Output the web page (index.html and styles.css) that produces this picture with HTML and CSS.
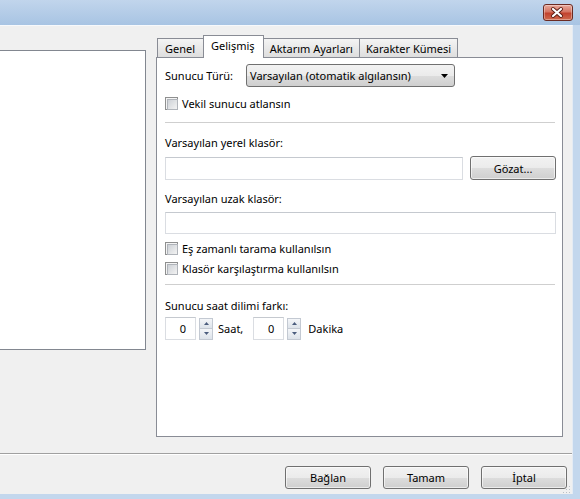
FILE: index.html
```html
<!DOCTYPE html>
<html lang="tr">

<head>
    <meta charset="UTF-8">
    <meta name="viewport" content="width=device-width, initial-scale=1.0">
    <link rel="stylesheet" href="styles.css">
</head>

<body>
    <div class="window">
        <div class="titlebar">
            <button class="close" type="button">
                <svg width="30" height="17" viewBox="0 0 30 17">
                    <path d="M11 5l8 7M19 5l-8 7" stroke="#5b1d14" stroke-width="4" stroke-linecap="round" />
                    <path d="M11 5l8 7M19 5l-8 7" stroke="#fff" stroke-width="2.2" stroke-linecap="round" />
                </svg>
            </button>
        </div>

        <div class="dialog">
            <div class="main">
                <div class="tree"></div>

                <div class="tabs-area">
                    <div class="tab-row">
                        <div class="tab">Genel</div>
                        <div class="tab active">Gelişmiş</div>
                        <div class="tab">Aktarım Ayarları</div>
                        <div class="tab">Karakter Kümesi</div>
                    </div>

                    <div class="panel">
                        <div class="row select-row">
                            <span class="field-label">Sunucu Türü:</span>
                            <div class="select">
                                <span>Varsayılan (otomatik algılansın)</span>
                                <svg width="7" height="4" viewBox="0 0 7 4"><path d="M0 0h7L3.5 4z" fill="#000" /></svg>
                            </div>
                        </div>

                        <label class="check first-check"><span class="cb"></span>Vekil sunucu atlansın</label>

                        <div class="sep sep-top"></div>

                        <div class="label label-local">Varsayılan yerel klasör:</div>
                        <div class="row input-row">
                            <div class="input grow"></div>
                            <button class="btn browse" type="button">Gözat...</button>
                        </div>

                        <div class="label label-remote">Varsayılan uzak klasör:</div>
                        <div class="input remote"></div>

                        <label class="check sync-check"><span class="cb"></span>Eş zamanlı tarama kullanılsın</label>
                        <label class="check cmp-check"><span class="cb"></span>Klasör karşılaştırma kullanılsın</label>

                        <div class="sep sep-bottom"></div>

                        <div class="label label-tz">Sunucu saat dilimi farkı:</div>
                        <div class="row spin-row">
                            <div class="input spin-input">0</div>
                            <div class="spinner">
                                <span><svg width="5" height="3" viewBox="0 0 5 3"><path d="M0 3h5L2.5 0z" fill="#4b5d7e" /></svg></span>
                                <span><svg width="5" height="3" viewBox="0 0 5 3"><path d="M0 0h5L2.5 3z" fill="#4b5d7e" /></svg></span>
                            </div>
                            <span class="unit">Saat,</span>
                            <div class="input spin-input">0</div>
                            <div class="spinner">
                                <span><svg width="5" height="3" viewBox="0 0 5 3"><path d="M0 3h5L2.5 0z" fill="#4b5d7e" /></svg></span>
                                <span><svg width="5" height="3" viewBox="0 0 5 3"><path d="M0 0h5L2.5 3z" fill="#4b5d7e" /></svg></span>
                            </div>
                            <span class="unit unit-last">Dakika</span>
                        </div>
                    </div>
                </div>
            </div>

            <div class="footer-sep"></div>

            <div class="buttons">
                <button class="btn" type="button">Bağlan</button>
                <button class="btn" type="button">Tamam</button>
                <button class="btn" type="button">İptal</button>
            </div>

            <svg class="grip" width="8" height="7" viewBox="0 0 8 7">
                <rect x="6" y="0" width="1" height="1" fill="#b8bec6" />
                <rect x="3" y="3" width="1" height="1" fill="#b8bec6" />
                <rect x="6" y="3" width="1" height="1" fill="#b8bec6" />
                <rect x="0" y="6" width="1" height="1" fill="#b8bec6" />
                <rect x="3" y="6" width="1" height="1" fill="#b8bec6" />
                <rect x="6" y="6" width="1" height="1" fill="#b8bec6" />
            </svg>
        </div>
    </div>
</body>

</html>
```

FILE: styles.css
```css
* {
    box-sizing: border-box;
}

body {
    margin: 0;
    font-family: "Noto Sans", "Open Sans", sans-serif;
    font-size: 11px;
    color: #000;
}

.window {
    width: 580px;
    height: 499px;
    background-color: #c3d7ed;
    overflow: hidden;
}

/* title bar with the red close button */
.titlebar {
    height: 25px;
    background: linear-gradient(#c1d5ec, #a8c4e3);
    display: flex;
    justify-content: flex-end;
    padding: 4px 7px 0 0;
}

.close {
    width: 30px;
    height: 17px;
    padding: 0;
    border: 1px solid #6b2a22;
    border-radius: 3px;
    background: linear-gradient(#e9a99b, #d57563 45%, #c2422e 55%, #cf6a4e);
    box-shadow: inset 0 0 0 1px rgba(255, 255, 255, 0.35);
    display: flex;
    align-items: center;
    justify-content: center;
}

.close svg {
    display: block;
    margin-left: -2px;
}

.dialog {
    position: relative;
    width: 573px;
    height: 469px;
    background-color: #f0f0f0;
    border-top: 1px solid #f7f9fc;
    border-right: 1px solid #e4ebf4;
}

.main {
    display: flex;
    align-items: flex-start;
    height: 411px;
}

.tree {
    width: 146px;
    height: 300px;
    margin-top: 24px;
    background-color: #fff;
    border: 1px solid #828790;
    border-left: none;
}

.tabs-area {
    width: 407px;
    margin-left: 10px;
    margin-top: 9px;
}

.tab-row {
    display: flex;
    align-items: flex-end;
    height: 22px;
    padding-left: 1px;
}

.tab {
    height: 19px;
    padding: 2px 6px 0;
    margin-left: -1px;
    border: 1px solid #898c95;
    border-bottom: none;
    background: linear-gradient(#f4f4f4, #e9e9e9 50%, #dedede);
    line-height: 15px;
    white-space: nowrap;
}

.tab:first-child {
    margin-left: 0;
    padding: 2px 8px 0 7px;
}

.tab.active {
    position: relative;
    z-index: 1;
    height: 23px;
    margin-bottom: -1px;
    padding: 2px 8px 0 7px;
    background: #fff;
}

.panel {
    height: 380px;
    background-color: #fff;
    border: 1px solid #898c95;
    padding: 0 6px 0 8px;
}

.row {
    display: flex;
    align-items: center;
}

.select-row {
    margin-top: 6px;
    height: 23px;
}

.field-label {
    width: 81px;
    flex: none;
}

.select {
    width: 209px;
    height: 23px;
    border: 1px solid #707070;
    border-radius: 3px;
    background: linear-gradient(#f2f2f2, #ebebeb 50%, #dddddd 50%, #cfcfcf);
    display: flex;
    align-items: center;
    justify-content: space-between;
    padding: 0 6px 0 3px;
}

.select svg {
    display: block;
}

/* checkbox rows */
.check {
    display: flex;
    align-items: center;
    height: 15px;
    gap: 4px;
}

.first-check {
    margin-top: 9px;
}

.sync-check {
    margin-top: 7px;
}

.cmp-check {
    margin-top: 5px;
}

.cb {
    width: 13px;
    height: 13px;
    flex: none;
    border: 1px solid #8e8f8f;
    background-color: #f4f4f4;
    padding: 1px;
}

.cb::before {
    content: "";
    display: block;
    width: 9px;
    height: 9px;
    border: 1px solid #b0b4ba;
    background: linear-gradient(135deg, #cdd1d6, #f3f3f3);
}

.sep {
    height: 1px;
    margin-right: 1px;
    background-color: #cfcfcf;
}

.sep-top {
    margin-top: 11px;
}

.sep-bottom {
    margin-top: 8px;
}

.label {
    line-height: 15px;
}

.label-local {
    margin-top: 12px;
}

.label-remote {
    margin-top: 11px;
}

.label-tz {
    margin-top: 13px;
}

.input {
    height: 23px;
    background-color: #fff;
    border: 1px solid #dadde2;
    border-top-color: #c5c9cf;
}

.input-row {
    margin-top: 6px;
    height: 24px;
    gap: 7px;
}

.grow {
    flex: 1;
}

.remote {
    margin-top: 6px;
    height: 22px;
}

.btn {
    width: 86px;
    height: 24px;
    padding: 0;
    border: 1px solid #707070;
    border-radius: 3px;
    background: linear-gradient(#f2f2f2, #ebebeb 50%, #dddddd 50%, #cfcfcf);
    box-shadow: inset 0 0 0 1px rgba(255, 255, 255, 0.6);
    font-family: inherit;
    font-size: 11px;
    color: #000;
}

/* time zone spinners */
.spin-row {
    margin-top: 4px;
    height: 23px;
}

.spin-input {
    width: 31px;
    text-align: right;
    padding-right: 9px;
    line-height: 21px;
}

.spinner {
    width: 14px;
    height: 22px;
    margin-left: 3px;
    display: flex;
    flex-direction: column;
}

.spinner span {
    flex: 1;
    border: 1px solid #c3c9d2;
    background: linear-gradient(#f4f6f9, #dde3ea);
    display: flex;
    align-items: center;
    justify-content: center;
}

.spinner span + span {
    border-top: none;
}

.spinner svg {
    display: block;
}

.unit {
    margin: 0 10px 0 5px;
}

.unit-last {
    margin-left: 7px;
}

.footer-sep {
    margin-top: 16px;
    height: 2px;
    border-top: 1px solid #a0a0a0;
    border-bottom: 1px solid #fff;
}

.buttons {
    display: flex;
    justify-content: flex-end;
    gap: 12px;
    margin-top: 11px;
    padding-right: 5px;
}

.buttons .btn {
    height: 23px;
}

.grip {
    position: absolute;
    right: 1px;
    bottom: 1px;
}
```
